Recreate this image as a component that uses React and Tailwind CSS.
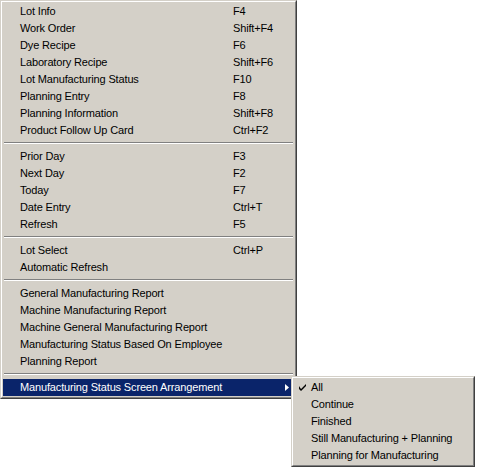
const groups = [
  [
    ["Lot Info", "F4"],
    ["Work Order", "Shift+F4"],
    ["Dye Recipe", "F6"],
    ["Laboratory Recipe", "Shift+F6"],
    ["Lot Manufacturing Status", "F10"],
    ["Planning Entry", "F8"],
    ["Planning Information", "Shift+F8"],
    ["Product Follow Up Card", "Ctrl+F2"],
  ],
  [
    ["Prior Day", "F3"],
    ["Next Day", "F2"],
    ["Today", "F7"],
    ["Date Entry", "Ctrl+T"],
    ["Refresh", "F5"],
  ],
  [
    ["Lot Select", "Ctrl+P"],
    ["Automatic Refresh", ""],
  ],
  [
    ["General Manufacturing Report", ""],
    ["Machine Manufacturing Report", ""],
    ["Machine General Manufacturing Report", ""],
    ["Manufacturing Status Based On Employee", ""],
    ["Planning Report", ""],
  ],
];

const subItems = [
  "All",
  "Continue",
  "Finished",
  "Still Manufacturing + Planning",
  "Planning for Manufacturing",
];

function Frame({ className = "", children }) {
  return (
    <div
      className={`bg-[#d4d0c8] border border-t-[#d4d0c8] border-l-[#d4d0c8] border-r-[#404040] border-b-[#404040] ${className}`}
    >
      <div className="border border-t-white border-l-white border-r-[#808080] border-b-[#808080] p-px">
        {children}
      </div>
    </div>
  );
}

function Separator() {
  return (
    <div className="h-[9px] pt-[3px] px-px">
      <div className="border-t border-t-[#808080] border-b border-b-white" />
    </div>
  );
}

function Item({ label, shortcut }) {
  return (
    <div className="h-[17px] flex items-center pl-[17px] leading-[17px]">
      <span className="w-[213px] whitespace-nowrap">{label}</span>
      <span className="whitespace-nowrap">{shortcut}</span>
    </div>
  );
}

export default function App() {
  return (
    <div
      className="relative w-[477px] h-[467px] bg-white text-[11px] tracking-[-0.15px] text-black"
      style={{ fontFamily: '"Liberation Sans", Arial, sans-serif' }}
    >
      <Frame className="w-[297px]">
        {groups.map((g, gi) => (
          <div key={gi}>
            {g.map(([label, shortcut]) => (
              <Item key={label} label={label} shortcut={shortcut} />
            ))}
            <Separator />
          </div>
        ))}
        {/* active item with submenu */}
        <div className="h-[17px] flex items-center justify-between pl-[17px] pr-[5px] bg-[#0a246a] text-white leading-[17px]">
          <span className="whitespace-nowrap">Manufacturing Status Screen Arrangement</span>
          <svg width="4" height="7" viewBox="0 0 4 7">
            <path d="M0 0 L4 3.5 L0 7 Z" fill="white" />
          </svg>
        </div>
      </Frame>

      {/* submenu */}
      <Frame className="absolute left-[291px] top-[376px] w-[184px]">
        {subItems.map((s, i) => (
          <div key={s} className="relative h-[17px] flex items-center pl-[17px] leading-[17px]">
            {i === 0 && (
              <svg className="absolute left-[5px] top-[5px]" width="7" height="7" viewBox="0 0 7 7">
                <path d="M0 2 V5 L2 7 L7 2 V0 L2 5 Z" fill="black" />
              </svg>
            )}
            <span className="whitespace-nowrap">{s}</span>
          </div>
        ))}
      </Frame>
    </div>
  );
}
